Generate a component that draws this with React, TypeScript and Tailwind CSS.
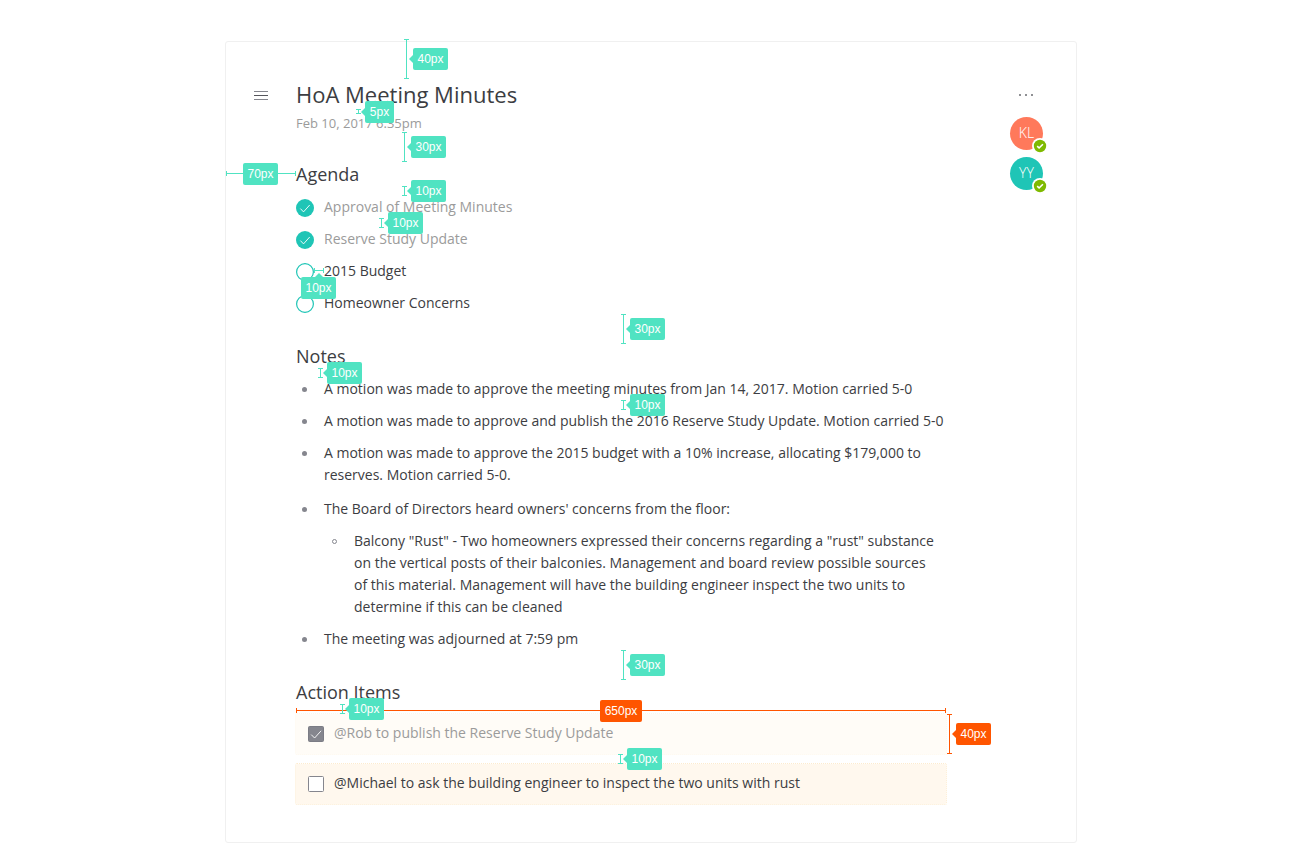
import React from "react";

type Tone = "teal" | "orange";

const tones: Record<Tone, { fill: string; left: string; up: string }> = {
  teal: { fill: "bg-[#50e3c2]", left: "border-r-[#50e3c2]", up: "border-b-[#50e3c2]" },
  orange: { fill: "bg-[#ff5500]", left: "border-r-[#ff5500]", up: "border-b-[#ff5500]" },
};

function Tag({ label, tone }: { label: string; tone: Tone }) {
  return (
    <div
      className={`flex h-[22px] items-center justify-center rounded-[2px] px-[4px] font-['Liberation_Sans',Arial,sans-serif] text-[12px] leading-[22px] whitespace-nowrap text-white ${tones[tone].fill}`}
    >
      {label}
    </div>
  );
}

/* Vertical dimension line with its label on the right. */
function VMeasure({ x, y, size, tone = "teal" }: { x: number; y: number; size: number; tone?: Tone }) {
  const t = tones[tone];
  return (
    <div className="absolute" style={{ left: x, top: y, height: size, width: 5 }}>
      <div className="flex h-full w-[5px] flex-col items-center">
        <div className={`h-px w-[5px] ${t.fill}`} />
        <div className={`w-px flex-1 ${t.fill}`} />
        <div className={`h-px w-[5px] ${t.fill}`} />
      </div>
      <div className="absolute left-[5px] flex items-center" style={{ top: Math.ceil(size / 2) - 11 }}>
        <div className={`h-0 w-0 border-y-[4px] border-r-[4px] border-y-transparent ${t.left}`} />
        <div className={size < 10 ? "w-[29px]" : "w-[35px]"}>
          <Tag label={`${size}px`} tone={tone} />
        </div>
      </div>
    </div>
  );
}

/* Horizontal dimension line; the label sits on the line or hangs below it. */
function HMeasure({
  x,
  y,
  size,
  offset,
  below = false,
  tone = "teal",
}: {
  x: number;
  y: number;
  size: number;
  offset: number;
  below?: boolean;
  tone?: Tone;
}) {
  const t = tones[tone];
  return (
    <div className="absolute" style={{ left: x, top: y, width: size, height: 5 }}>
      <div className="flex h-[5px] w-full items-center">
        <div className={`h-[5px] w-px ${t.fill}`} />
        <div className={`h-px flex-1 ${t.fill}`} />
        <div className={`h-[5px] w-px ${t.fill}`} />
      </div>
      <div
        className={`absolute flex flex-col items-center ${below ? "top-[5px]" : "top-[-8px]"}`}
        style={{ left: offset }}
      >
        {below && <div className={`h-0 w-0 border-x-[4px] border-b-[4px] border-x-transparent ${t.up}`} />}
        <div className={size > 99 ? "w-[42px]" : "w-[35px]"}>
          <Tag label={`${size}px`} tone={tone} />
        </div>
      </div>
    </div>
  );
}

function Heading({ children }: { children: React.ReactNode }) {
  return <h2 className="text-[18px] leading-[24px] text-[#3c3d42]">{children}</h2>;
}

function AgendaItem({ done = false, children }: { done?: boolean; children: React.ReactNode }) {
  return (
    <li className="flex gap-[10px]">
      <svg className="mt-[3px] h-[18px] w-[18px] shrink-0" viewBox="0 0 18 18" fill="none">
        {done ? (
          <>
            <circle cx="9" cy="9" r="9" fill="#1fc5b6" />
            <path d="M4.4 9.6l3.1 3.3 6.2-6.9" stroke="#fff" strokeWidth="0.9" />
          </>
        ) : (
          <circle cx="9" cy="9" r="8.4" stroke="#1fc5b6" strokeWidth="1.2" fill="#fff" />
        )}
      </svg>
      <span className={done ? "text-[#9b9b9b]" : ""}>{children}</span>
    </li>
  );
}

function Bullet({ children }: { children: React.ReactNode }) {
  return (
    <li className="flex">
      <span className="mt-[9px] mr-[17px] ml-[6px] h-[5px] w-[5px] shrink-0 rounded-full bg-[#85868e]" />
      <div>{children}</div>
    </li>
  );
}

function ActionItem({ done = false, children }: { done?: boolean; children: React.ReactNode }) {
  return (
    <li
      className={`-mx-px -mt-px flex h-[42px] w-[652px] rounded-[2px] border border-dotted bg-clip-padding pt-[8px] pl-[12px] ${
        done ? "border-[#fff7e9] bg-[#fffcf7]" : "border-[#fdebcd] bg-[#fff8ee]"
      }`}
    >
      <svg className="mt-[4px] mr-[10px] h-[16px] w-[16px] shrink-0" viewBox="0 0 16 16" fill="none">
        <rect
          x="0.5"
          y="0.5"
          width="15"
          height="15"
          rx="1"
          fill={done ? "#85868e" : "#fff"}
          stroke={done ? "#7b7c85" : "#85868e"}
        />
        {done && <path d="M3.2 8.6l3.4 3.4 6.5-7.2" stroke="#fff" strokeWidth="0.9" />}
      </svg>
      <span className={done ? "text-[#9b9b9b]" : ""}>{children}</span>
    </li>
  );
}

function Avatar({ initials, color }: { initials: string; color: string }) {
  return (
    <div
      className={`relative flex h-[33px] w-[33px] items-center justify-center rounded-full pb-px text-[14px] font-light text-white ${color}`}
    >
      {initials}
      <svg className="absolute top-[21px] left-[22px] h-[16px] w-[16px]" viewBox="0 0 16 16" fill="none">
        <circle cx="8" cy="8" r="8" fill="#fff" />
        <circle cx="8" cy="8" r="6.2" fill="#7fba00" />
        <path d="M5.2 8.2l1.9 1.8 3.8-3.7" stroke="#fff" strokeWidth="1.6" />
      </svg>
    </div>
  );
}

export default function App() {
  return (
    <div className="relative h-[850px] w-[1300px] overflow-hidden bg-white pt-[41px] pl-[225px] font-['Open_Sans',sans-serif]">
      <main className="flex h-[802px] w-[852px] rounded-[3px] border border-[#f0f0f0] bg-white pt-[37px] text-[14px] leading-[22px] text-[#3c3d42]">
        <aside className="w-[70px] shrink-0 pt-[12px] pl-[28px]">
          <svg className="block h-[9px] w-[14px]" viewBox="0 0 14 9">
            <path d="M0 .5h14M0 8.5h14" stroke="#85868e" />
            <path d="M0 4.5h14" stroke="#55565c" />
          </svg>
        </aside>

        <article className="w-[650px] shrink-0">
          <header className="flex flex-col gap-[5px]">
            <h1 className="text-[22px] leading-[30px]">HoA Meeting Minutes</h1>
            <p className="text-[13px] leading-[18px] text-[#9b9b9b]">Feb 10, 2017 6:35pm</p>
          </header>

          <section className="mt-[30px] flex flex-col gap-[10px]">
            <Heading>Agenda</Heading>
            <ul className="flex flex-col gap-[10px]">
              <AgendaItem done>Approval of Meeting Minutes</AgendaItem>
              <AgendaItem done>Reserve Study Update</AgendaItem>
              <AgendaItem>2015 Budget</AgendaItem>
              <AgendaItem>Homeowner Concerns</AgendaItem>
            </ul>
          </section>

          <section className="mt-[30px] flex flex-col gap-[10px]">
            <Heading>Notes</Heading>
            <ul className="flex flex-col gap-[10px] whitespace-nowrap">
              <Bullet>A motion was made to approve the meeting minutes from Jan 14, 2017. Motion carried 5-0</Bullet>
              <Bullet>
                A motion was made to approve and publish the 2016 Reserve Study Update. Motion carried 5-0
              </Bullet>
              <Bullet>
                <p className="mb-[2px]">
                  A motion was made to approve the 2015 budget with a 10% increase, allocating $179,000 to
                  <br />
                  reserves. Motion carried 5-0.
                </p>
              </Bullet>
              <Bullet>
                <p>The Board of Directors heard owners' concerns from the floor:</p>
                <ul className="mt-[10px]">
                  <li className="flex">
                    <span className="mt-[9px] mr-[17px] ml-[8px] h-[5px] w-[5px] shrink-0 rounded-full border border-[#85868e]" />
                    <p>
                      Balcony "Rust" - Two homeowners expressed their concerns regarding a "rust" substance
                      <br />
                      on the vertical posts of their balconies. Management and board review possible sources
                      <br />
                      of this material. Management will have the building engineer inspect the two units to
                      <br />
                      determine if this can be cleaned
                    </p>
                  </li>
                </ul>
              </Bullet>
              <Bullet>The meeting was adjourned at 7:59 pm</Bullet>
            </ul>
          </section>

          <section className="mt-[30px] flex flex-col gap-[10px]">
            <Heading>Action Items</Heading>
            <ul className="flex flex-col gap-[9px]">
              <ActionItem done>@Rob to publish the Reserve Study Update</ActionItem>
              <ActionItem>@Michael to ask the building engineer to inspect the two units with rust</ActionItem>
            </ul>
          </section>
        </article>

        <aside className="flex flex-col pt-[15px] pl-[64px]">
          <svg className="ml-[9px] h-[2px] w-[14px]" viewBox="0 0 14 2">
            <path d="M1 0v2M7 0v2M13 0v2" stroke="#6b6c72" strokeWidth="1.5" />
          </svg>
          <div className="mt-[21px] flex flex-col gap-[7px]">
            <Avatar initials="KL" color="bg-[#ff795b]" />
            <Avatar initials="YY" color="bg-[#1fc5b6]" />
          </div>
        </aside>
      </main>

      <VMeasure x={404} y={39} size={40} />
      <VMeasure x={356} y={109} size={5} />
      <VMeasure x={402} y={132} size={30} />
      <HMeasure x={226} y={171} size={70} offset={17} />
      <VMeasure x={402} y={186} size={10} />
      <VMeasure x={379} y={218} size={10} />
      <HMeasure x={314} y={268} size={10} offset={-13} below />
      <VMeasure x={621} y={314} size={30} />
      <VMeasure x={318} y={368} size={10} />
      <VMeasure x={621} y={400} size={10} />
      <VMeasure x={621} y={650} size={30} />
      <HMeasure x={296} y={708} size={650} offset={304} tone="orange" />
      <VMeasure x={340} y={704} size={10} />
      <VMeasure x={947} y={714} size={40} tone="orange" />
      <VMeasure x={618} y={754} size={10} />
    </div>
  );
}
